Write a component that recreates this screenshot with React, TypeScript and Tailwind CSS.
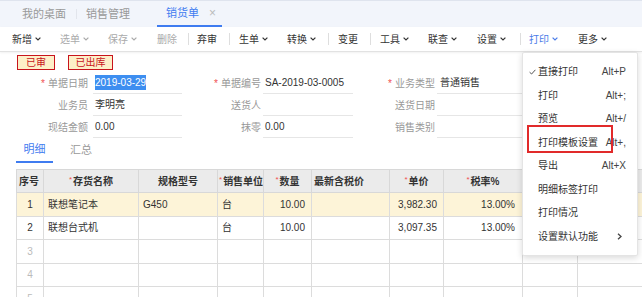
import React from "react";

type ToolItem = { label: string; chevron?: boolean; tone?: "muted" | "active"; cls: string } | { sep: true; cls: string };

const tools: ToolItem[] = [
  { label: "新增", chevron: true, cls: "ml-[12px]" },
  { label: "选单", chevron: true, tone: "muted", cls: "ml-[19px]" },
  { label: "保存", chevron: true, tone: "muted", cls: "ml-[19px]" },
  { label: "删除", tone: "muted", cls: "ml-[20px]" },
  { sep: true, cls: "ml-[11px]" },
  { label: "弃审", cls: "ml-[8px]" },
  { sep: true, cls: "ml-[12px]" },
  { label: "生单", chevron: true, cls: "ml-[9px]" },
  { label: "转换", chevron: true, cls: "ml-[19px]" },
  { sep: true, cls: "ml-[12px]" },
  { label: "变更", cls: "ml-[9px]" },
  { sep: true, cls: "ml-[12px]" },
  { label: "工具", chevron: true, cls: "ml-[9px]" },
  { label: "联查", chevron: true, cls: "ml-[19px]" },
  { label: "设置", chevron: true, cls: "ml-[20px]" },
  { sep: true, cls: "ml-[14px]" },
  { label: "打印", chevron: true, tone: "active", cls: "ml-[8px]" },
  { label: "更多", chevron: true, cls: "ml-[20px]" },
];

const menu = [
  { label: "直接打印", key: "Alt+P", checked: true },
  { label: "打印", key: "Alt+;" },
  { label: "预览", key: "Alt+/" },
  { label: "打印模板设置", key: "Alt+," },
  { label: "导出", key: "Alt+X" },
  { label: "明细标签打印" },
  { label: "打印情况" },
  { label: "设置默认功能", sub: true },
];

function Chevron() {
  return (
    <svg width="6" height="4" viewBox="0 0 6 4" className="ml-[3px]">
      <path d="M0.6 0.6 L3 3 L5.4 0.6" fill="none" stroke="currentColor" strokeWidth="1.2" />
    </svg>
  );
}

function Req() {
  return <span className="mr-[3px] text-[#f05050]">*</span>;
}

function HReq() {
  return <span className="mr-[1px] align-top text-[8px] font-normal text-[#f05050]">*</span>;
}

function Field({ label, required, value, selected, lw, iw, pl }: { label: string; required?: boolean; value?: string; selected?: boolean; lw: string; iw: string; pl: string }) {
  return (
    <>
      <div className={`${lw} pr-[2px] text-right text-[#999]`}>
        {required && <Req />}
        {label}
      </div>
      <div className={`${iw} ${pl} flex h-full items-center border-b border-[#e6e6e6] text-[#333]`}>
        {selected ? <span className="bg-[#3d8ef0] text-white">{value}</span> : value}
      </div>
    </>
  );
}

const rows = [
  { no: "1", name: "联想笔记本", spec: "G450", unit: "台", qty: "10.00", price: "3,982.30", tax: "13.00%", hl: true },
  { no: "2", name: "联想台式机", spec: "", unit: "台", qty: "10.00", price: "3,097.35", tax: "13.00%" },
  { no: "3" },
  { no: "4" },
  { no: "5" },
];

const th = "border border-[#d8d8d8] whitespace-nowrap font-bold";
const td = "border border-[#dcdcdc]";

export default function App() {
  return (
    <div className="relative h-[297px] w-[642px] overflow-hidden bg-white font-['Liberation_Sans','Noto_Sans_CJK_SC',sans-serif] text-[10px] text-[#333]">
      {/* page tabs */}
      <div className="flex h-[27px] items-stretch border-t border-[#dfe4ee] bg-[#f2f5fb] text-[11px] text-[#999]">
        <div className="ml-[22px] flex items-center">我的桌面</div>
        <div className="my-[8px] ml-[10px] w-px bg-[#e2e5ec]" />
        <div className="ml-[9px] flex items-center">销售管理</div>
        <div className="ml-[27px] flex items-center border-b-2 border-[#3f7cf0] pl-[9px] pr-[6px] text-[#3f7cf0]">
          销货单
          <span className="ml-[10px] text-[12px] text-[#bbb]">×</span>
        </div>
      </div>

      {/* toolbar */}
      <div className="flex h-[25px] items-center border-b border-[#e2e2e2] bg-white shadow-[0_1px_2px_rgba(0,0,0,0.06)]">
        {tools.map((t, i) =>
          "sep" in t ? (
            <div key={i} className={`${t.cls} h-[12px] w-px bg-[#dedede]`} />
          ) : (
            <div
              key={i}
              className={`${t.cls} flex items-center ${t.tone === "muted" ? "text-[#aaa]" : t.tone === "active" ? "text-[#4a7ce8]" : "text-[#333]"}`}
            >
              {t.label}
              {t.chevron && <Chevron />}
            </div>
          )
        )}
      </div>

      {/* status badges */}
      <div className="mt-[3px] flex gap-[13px] pl-[17px]">
        <div className="flex h-[15px] w-[38px] items-center justify-center border-[1.5px] border-[#c8141c] bg-[#fdefc8] text-[#c8141c]">已审</div>
        <div className="flex h-[15px] w-[45px] items-center justify-center border-[1.5px] border-[#c8141c] bg-[#fdefc8] text-[#c8141c]">已出库</div>
      </div>

      {/* form */}
      <div className="mt-[2px] flex flex-col">
        <div className="flex h-[22px] items-center">
          <Field label="单据日期" required value="2019-03-29" selected lw="w-[90px]" iw="ml-[3px] w-[89px]" pl="pl-[2px]" />
          <Field label="单据编号" required value="SA-2019-03-0005" lw="w-[81px]" iw="w-[90px]" pl="pl-[2px]" />
          <Field label="业务类型" required value="普通销售" lw="w-[84px]" iw="w-[90px]" pl="pl-[3px]" />
        </div>
        <div className="flex h-[22px] items-center">
          <Field label="业务员" value="李明亮" lw="w-[90px]" iw="ml-[3px] w-[89px]" pl="pl-[2px]" />
          <Field label="送货人" lw="w-[81px]" iw="w-[90px]" pl="pl-[2px]" />
          <Field label="送货日期" lw="w-[84px]" iw="w-[90px]" pl="pl-[3px]" />
        </div>
        <div className="flex h-[22px] items-center">
          <Field label="现结金额" value="0.00" lw="w-[90px]" iw="ml-[3px] w-[89px]" pl="pl-[2px]" />
          <Field label="抹零" value="0.00" lw="w-[81px]" iw="w-[90px]" pl="pl-[2px]" />
          <Field label="销售类别" lw="w-[84px]" iw="w-[90px]" pl="pl-[3px]" />
        </div>
      </div>

      {/* detail tabs */}
      <div className="flex h-[25px] items-stretch pl-[16px] text-[11px]">
        <div className="flex w-[37px] items-center justify-center border-b-2 border-[#3f7cf0] text-[#3f7cf0]">明细</div>
        <div className="ml-[17px] flex items-center text-[#999]">汇总</div>
      </div>

      {/* grid */}
      <table className="ml-[16px] mt-[6px] w-[641px] table-fixed border-collapse">
        <colgroup>
          <col className="w-[27px]" />
          <col className="w-[95px]" />
          <col className="w-[79px]" />
          <col className="w-[46px]" />
          <col className="w-[48px]" />
          <col className="w-[78px]" />
          <col className="w-[54px]" />
          <col className="w-[79px]" />
          <col className="w-[55px]" />
          <col className="w-[80px]" />
        </colgroup>
        <thead>
          <tr className="h-[23px] bg-[#ebebeb] text-[#333]">
            <th className={`${th} pl-[2px] text-left`}>序号</th>
            <th className={`${th} text-center`}><HReq />存货名称</th>
            <th className={`${th} text-center`}>规格型号</th>
            <th className={`${th} overflow-hidden pl-[1px] text-left`}><HReq />销售单位</th>
            <th className={`${th} text-center`}><HReq />数量</th>
            <th className={`${th} pl-[2px] text-left`}>最新含税价</th>
            <th className={`${th} text-center`}><HReq />单价</th>
            <th className={`${th} text-center`}><HReq />税率%</th>
            <th className={th} />
            <th className={th} />
          </tr>
        </thead>
        <tbody>
          {rows.map((r) => (
            <tr key={r.no} className={`h-[23.5px] ${r.hl ? "bg-[#fdf4d8]" : "bg-white"}`}>
              <td className={`${td} text-center ${r.name ? "text-[#333]" : "text-[#bbb]"}`}>{r.no}</td>
              <td className={`${td} pl-[4px]`}>{r.name}</td>
              <td className={`${td} pl-[4px]`}>{r.spec}</td>
              <td className={`${td} pl-[4px]`}>{r.unit}</td>
              <td className={`${td} pr-[6px] text-right`}>{r.qty}</td>
              <td className={td} />
              <td className={`${td} pr-[6px] text-right`}>{r.price}</td>
              <td className={`${td} pr-[7px] text-right`}>{r.tax}</td>
              <td className={td} />
              <td className={td} />
            </tr>
          ))}
        </tbody>
      </table>

      {/* print dropdown */}
      <div className="absolute left-[522px] top-[52px] w-[116px] rounded-[2px] border border-[#e4e4e4] bg-white pb-[7px] pt-[7px] shadow-[0_2px_6px_rgba(0,0,0,0.15)]">
        {menu.map((m) => (
          <div key={m.label} className="flex h-[23.5px] items-center justify-between pl-[6px] pr-[11px] text-[#333]">
            <div className="flex items-center">
              <span className="flex w-[9px] items-center">
                {m.checked && (
                  <svg width="7" height="6" viewBox="0 0 7 6">
                    <path d="M0.6 3.2 L2.6 5 L6.4 0.8" fill="none" stroke="#555" strokeWidth="1" />
                  </svg>
                )}
              </span>
              {m.label}
            </div>
            {m.key && <span className="text-[#444]">{m.key}</span>}
            {m.sub && (
              <svg width="5" height="7" viewBox="0 0 5 7" className="mr-[4px]">
                <path d="M1 0.8 L4 3.5 L1 6.2" fill="none" stroke="#444" strokeWidth="1.3" />
              </svg>
            )}
          </div>
        ))}
      </div>

      {/* highlight box */}
      <div className="absolute left-[527px] top-[125px] h-[28px] w-[86px] border-2 border-[#e12a2a]" />
    </div>
  );
}
